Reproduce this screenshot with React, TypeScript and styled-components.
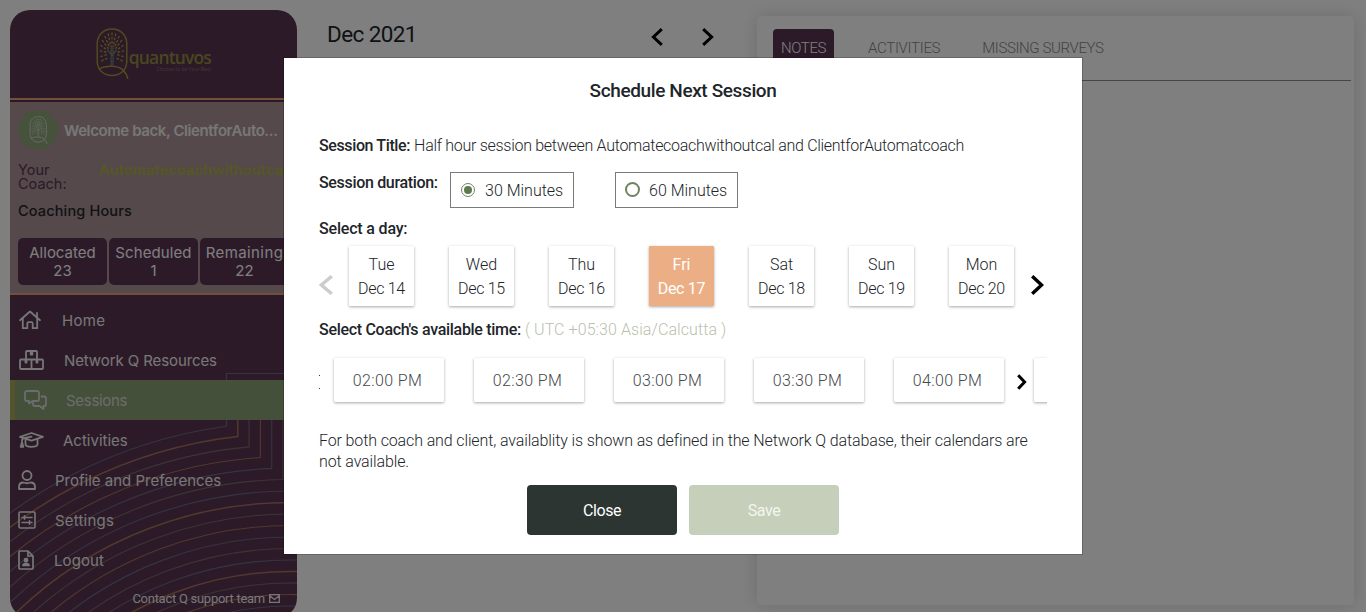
import React from 'react';
import styled, { createGlobalStyle } from 'styled-components';

const Global = createGlobalStyle`
  * { box-sizing: border-box; }
  html, body { margin: 0; height: 612px; overflow: hidden; background: #fff; }
  body { font-family: Roboto, "Liberation Sans", sans-serif; color: #212529; }
`;

const Page = styled.div`
  display: flex;
  align-items: flex-start;
  width: 1366px;
  height: 612px;
  overflow: hidden;
  background: #fff;
`;

const Txt = styled.span<{ $ls?: number }>`
  letter-spacing: ${p => p.$ls ?? 0}px;
  white-space: nowrap;
`;

/* ---------- sidebar ---------- */

const Sidebar = styled.aside`
  display: flex;
  flex-direction: column;
  flex: none;
  width: 287px;
  height: 608px;
  margin: 10px 0 0 10px;
  border-radius: 20px;
  overflow: hidden;
  background: #583450;
  font-family: Inter, "Open Sans", sans-serif;
  position: relative;
`;

const LogoArea = styled.div`
  display: flex;
  align-items: flex-start;
  height: 88px;
  padding: 18px 0 0 86px;
`;

const LogoWords = styled.div`
  display: flex;
  flex-direction: column;
  align-items: flex-end;
  width: 82px;
  margin: 18px 0 0 0;
  color: #948d40;
  font-family: "Open Sans", sans-serif;
`;

const Brand = styled.div`
  font-size: 17.5px;
  line-height: 23px;
  font-weight: 600;
  letter-spacing: -0.85px;
`;

const Motto = styled.div`
  font-size: 5px;
  line-height: 6px;
  margin-top: -3px;
  white-space: nowrap;
  color: #7d7d66;
`;

const Welcome = styled.section`
  height: 197px;
  padding: 8px 0 0 8px;
  border-top: 2px solid #e6a06f;
  border-bottom: 2px solid #e6a06f;
  background: #aa9296;
  box-shadow: inset 0 2px 0 #583450;
`;

const Greeting = styled.div`
  display: flex;
  align-items: center;
  gap: 6px;
  height: 44px;
  color: #efefef;
  font-size: 15px;
  font-weight: 600;
`;

const Avatar = styled.div`
  display: flex;
  align-items: center;
  justify-content: center;
  width: 40px;
  height: 40px;
  border-radius: 50%;
  background: #8ca577;
`;

const Coach = styled.div`
  display: flex;
  height: 31px;
  margin-top: 11px;
  font-size: 14.5px;
  line-height: 14px;
  color: #583450;
`;

const CoachLabel = styled.div`
  display: flex;
  flex-direction: column;
  width: 81px;
`;

const CoachName = styled.div`
  color: #aab045;
  font-weight: 600;
`;

const HoursTitle = styled.div`
  margin-top: 7px;
  font-size: 14.5px;
  line-height: 20px;
  font-weight: 500;
  color: #212529;
`;

const Hours = styled.div`
  display: flex;
  gap: 2px;
  margin-top: 17px;
`;

const HourBox = styled.div`
  display: flex;
  flex-direction: column;
  align-items: center;
  flex: none;
  width: 89px;
  height: 47px;
  padding-top: 6px;
  border-radius: 5px;
  background: #583450;
  color: #fff;
  font-size: 15px;
  line-height: 18px;
`;

const Nav = styled.nav`
  display: flex;
  flex-direction: column;
  padding-top: 5px;
  color: #efefef;
`;

const NavItem = styled.div<{ $active?: boolean; $gap: number; $pad: number }>`
  display: flex;
  align-items: center;
  gap: ${p => p.$gap}px;
  height: 40px;
  padding-left: ${p => p.$pad}px;
  font-size: 15px;
  color: ${p => (p.$active ? '#d9d9d9' : '#efefef')};
  border-left: ${p => (p.$active ? '5px solid #aaa45c' : '0')};
  background: ${p => (p.$active ? '#8aa074' : 'transparent')};
  & > svg { flex: none; }
`;

const Front = styled.div`
  position: relative;
`;

const Waves = styled.svg`
  position: absolute;
  left: 0;
  top: 0;
`;

const Support = styled.div`
  display: flex;
  align-items: center;
  justify-content: flex-end;
  gap: 4px;
  height: 20px;
  margin-top: 8px;
  padding-right: 17px;
  color: #efefef;
  font-family: Roboto, sans-serif;
  font-size: 13px;
`;

/* ---------- calendar column and notes panel ---------- */

const Calendar = styled.main`
  display: flex;
  flex: none;
  align-items: center;
  width: 416px;
  height: 34px;
  margin: 18px 0 0 30px;
`;

const Month = styled.h1`
  flex: 1;
  margin: 0;
  padding-bottom: 3px;
  font-size: 22.5px;
  line-height: 30px;
  font-weight: 400;
`;

const Arrows = styled.div`
  display: flex;
  gap: 39px;
  padding: 3px 29px 0 0;
`;

const Notes = styled.section`
  flex: none;
  width: 597px;
  height: 589px;
  margin: 16px 0 0 14px;
  padding: 13px 3px 0 16px;
  border-radius: 5px;
  box-shadow: 0 0 18px rgba(0, 0, 0, 0.15);
`;

const Tabs = styled.div`
  display: flex;
  gap: 26px;
  height: 52px;
  border-bottom: 1px solid #8c8c8c;
`;

const Tab = styled.div<{ $on?: boolean }>`
  height: 51px;
  padding: 9px 8px 0;
  border-radius: 4px;
  font-size: 15px;
  line-height: 20px;
  font-weight: 300;
  color: ${p => (p.$on ? '#fff' : '#868686')};
  background: ${p => (p.$on ? '#583450' : 'transparent')};
`;

/* ---------- dialog ---------- */

const Overlay = styled.div`
  position: fixed;
  inset: 0;
  display: flex;
  align-items: center;
  justify-content: center;
  background: rgba(0, 0, 0, 0.5);
`;

const Dialog = styled.div`
  width: 800px;
  height: 498px;
  padding: 20px 35px 0;
  border: 1px solid rgba(0, 0, 0, 0.2);
  background: #fff;
  background-clip: padding-box;
  font-size: 16px;
  font-weight: 300;
  line-height: 24px;
`;

const Title = styled.h2`
  margin: 0 0 32px;
  font-size: 19px;
  line-height: 26px;
  height: 24px;
  font-weight: 500;
  text-align: center;
`;

const Line = styled.div<{ $mt?: number }>`
  display: flex;
  gap: 4px;
  height: 24px;
  margin-top: ${p => p.$mt ?? 0}px;
`;

const Label = styled(Txt)`
  font-weight: 500;
`;

const Zone = styled(Txt)`
  color: #b9bfae;
`;

const Duration = styled.div`
  display: flex;
  height: 36px;
  margin-top: 14px;
`;

const DurationLabel = styled(Label)`
  width: 131px;
  line-height: 22px;
`;

const Choice = styled.div<{ $w: number }>`
  display: flex;
  align-items: center;
  gap: 10px;
  width: ${p => p.$w}px;
  margin-right: 41px;
  padding: 1px 0 0 10px;
  border: 1px solid #7b7b7b;
  & > span { padding-top: 1px; margin-left: -1px; }
`;

const Radio = styled.i<{ $on?: boolean }>`
  display: flex;
  align-items: center;
  justify-content: center;
  width: ${p => (p.$on ? 14 : 15)}px;
  height: ${p => (p.$on ? 14 : 15)}px;
  margin: ${p => (p.$on ? '-2px 1px 0 0' : '-2px 0 0 -1px')};
  border: ${p => (p.$on ? '1px' : '2px')} solid #6f8560;
  border-radius: 50%;
  &::after {
    content: '';
    width: 8px;
    height: 8px;
    border-radius: 50%;
    background: ${p => (p.$on ? '#5f7a4d' : 'transparent')};
  }
`;

const Days = styled.div`
  display: flex;
  align-items: center;
  height: 60px;
  margin-top: 5px;
  & > svg { margin-top: 18px; }
`;

const DayList = styled.div`
  display: flex;
  gap: 35px;
  margin: 0 17px 0 16px;
`;

const Day = styled.div<{ $on?: boolean }>`
  display: flex;
  flex-direction: column;
  align-items: center;
  width: 65px;
  height: 60px;
  padding-top: 7px;
  border-radius: 1px;
  box-shadow: 0 1px 3px rgba(0, 0, 0, 0.35);
  font-weight: ${p => (p.$on ? 400 : 300)};
  color: ${p => (p.$on ? '#fff' : '#212529')};
  background: ${p => (p.$on ? '#ecae84' : '#fff')};
`;

const Times = styled.div`
  display: flex;
  align-items: center;
  width: 728px;
  height: 60px;
  margin-top: 8px;
  overflow: hidden;
  & > svg { flex: none; margin: 3px 7px 0 1px; }
`;

const Dots = styled.div`
  display: flex;
  flex-direction: column;
  justify-content: space-between;
  flex: none;
  width: 15px;
  height: 14px;
  margin-top: 3px;
  &::before, &::after {
    content: '';
    width: 1px;
    height: 1px;
    background: #333;
  }
`;

const Slot = styled.div<{ $gap?: number }>`
  display: flex;
  align-items: center;
  justify-content: center;
  flex: none;
  width: 110px;
  height: 44px;
  padding: 2px 3px 0 0;
  margin-right: ${p => p.$gap ?? 30}px;
  border-radius: 1px;
  box-shadow: 0 1px 3px rgba(0, 0, 0, 0.35);
  color: #45494d;
`;

const Hint = styled.div`
  display: flex;
  flex-direction: column;
  height: 42px;
  margin-top: 20px;
  line-height: 21px;
`;

const Buttons = styled.div`
  display: flex;
  justify-content: center;
  gap: 12px;
  margin-top: 13px;
`;

const Button = styled.button<{ $muted?: boolean }>`
  width: 150px;
  height: 50px;
  padding: 1px 0 0;
  border: 0;
  border-radius: 4px;
  font: 400 16px Roboto, sans-serif;
  color: ${p => (p.$muted ? '#f3f5ef' : '#fff')};
  background: ${p => (p.$muted ? '#c5cfba' : '#2d3533')};
`;

/* ---------- drawings ---------- */

const Chevron = ({ w, h, left, color = '#000', sw = 3 }: { w: number; h: number; left?: boolean; color?: string; sw?: number }) => (
  <svg width={w} height={h} viewBox={`0 0 ${w} ${h}`} fill="none" stroke={color} strokeWidth={sw}>
    <path d={left ? `M${w - 1.2} 1.2L2.4 ${h / 2}L${w - 1.2} ${h - 1.2}` : `M1.2 1.2L${w - 2.4} ${h / 2}L1.2 ${h - 1.2}`} />
  </svg>
);

const Tree = ({ w, h, color, leaf, trunk, sw }: { w: number; h: number; color: string; leaf: string; trunk: string; sw: number }) => {
  const rays = [-108, -90, -72, -54, -36, -18, 0, 18, 36, 54, 72, 90, 108];
  return (
    <svg width={w} height={h} viewBox="0 0 32 50" fill="none" stroke={color} strokeWidth={sw}>
      <path d="M15.5 1C24 1 30 7 30 15.500V32C30 41 24 46.500 15.500 46.500C7 46.500 1 41 1 32V15.500C1 7 7 1 15.500 1Z" />
      <path d="M2.500 40C10 36 22 37 26 41C29 44 30.500 46 31 50" />
      <g stroke={leaf} strokeWidth={sw * 0.95} strokeDasharray="2.600 1.500">
        {rays.map(deg => {
          const s = Math.sin((deg * Math.PI) / 180);
          const c = Math.cos((deg * Math.PI) / 180);
          return <path key={deg} d={`M${15.5 + s * 12} ${22.5 - c * 18}L${15.5 + s * 4} ${24 - c * 6}`} />;
        })}
        <path d="M5 32.500l6-3M26 32.500l-6-3" />
      </g>
      <path d="M14.700 37V18M16.500 37V18M15.500 27L11.500 22M15.500 27L19.500 22" stroke={trunk} strokeWidth="1" />
    </svg>
  );
};

const stroke = { fill: 'none', stroke: 'currentColor', strokeWidth: 1.8, strokeLinejoin: 'round' as const, strokeLinecap: 'round' as const };

const HomeIcon = () => (
  <svg width="22" height="20" viewBox="0 0 22 20" {...stroke}>
    <path d="M1 10.200L11 1.500L21 10.200M18 7V3M3.800 8.500V18.200H8.300V13.500Q8.300 12.200 9.600 12.200H12.400Q13.700 12.200 13.700 13.500V18.200H18.200V8.500" />
  </svg>
);
const BoxesIcon = () => (
  <svg width="25" height="20" viewBox="0 0 25 20" {...stroke}>
    <path d="M7 9V2Q7 1 8 1H17Q18 1 18 2V9M2 9.500H23Q24 9.500 24 10.500V18Q24 19 23 19H2Q1 19 1 18V10.500Q1 9.500 2 9.500ZM12.500 9.500V19M11.700 1.500V4.500H13.300V1.500M6.500 10V12.500H7.500V10M17.500 10V12.500H18.500V10" />
  </svg>
);
const ChatIcon = () => (
  <svg width="23" height="20" viewBox="0 0 23 20" {...stroke}>
    <path d="M3 1H13Q15 1 15 3V9Q15 11 13 11H8.500L5 13.500V11H3Q1 11 1 9V3Q1 1 3 1ZM17.500 6.500H20Q22 6.500 22 8.500V14Q22 16 20 16H19.500V19L15.500 16H11Q9 16 9 14V13" />
  </svg>
);
const CapIcon = () => (
  <svg width="25" height="16" viewBox="0 0 25 16" {...stroke}>
    <path d="M12.500 1L24 4.800L12.500 8.600L1 4.800ZM6.500 7V12.500Q7 14.800 12.500 14.800T18.500 12.500V7M12.500 4.700L5 6.200Q3 6.700 3 9M3 10L1.700 14.800H4.300L3 10" />
  </svg>
);
const UserIcon = () => (
  <svg width="18" height="20" viewBox="0 0 18 20" {...stroke}>
    <circle cx="9" cy="5.500" r="4.500" />
    <path d="M1 19V17Q1 12.500 5.500 12.500Q9 14 12.500 12.500Q17 12.500 17 17V19Z" />
  </svg>
);
const SlidersIcon = () => (
  <svg width="18" height="18" viewBox="0 0 18 18" {...stroke} strokeWidth={1.6}>
    <rect x="1" y="1" width="16" height="16" rx="1.200" />
    <path d="M4 6.500H14M6.500 4.700V8.300M4 11.500H14M11.500 9.700V13.300" />
  </svg>
);
const FileIcon = () => (
  <svg width="16" height="20" viewBox="0 0 16 20" {...stroke} strokeWidth={1.7}>
    <path d="M2 1H10L15 6V18Q15 19 14 19H2Q1 19 1 18V2Q1 1 2 1ZM10 1V6H15" />
    <circle cx="8" cy="10.300" r="1.600" fill="currentColor" />
    <path d="M5 15.500Q5 13.500 8 13.500T11 15.500Z" fill="currentColor" />
  </svg>
);

const waveColors = ['#6a6a82', '#a4705a', '#7a6a68', '#a4705a', '#6a6a82', '#7a6a68'];

const WaveArt = () => (
  <Waves width="287" height="608" viewBox="10 10 287 608" fill="none">
    <path d="M297 373.500H226.500V426" stroke={waveColors[0]} strokeWidth="1.200" />
    {Array.from({ length: 24 }, (_, i) => {
      const r = 476 - i * 11.5;
      const edge = i < 6 ? 226.5 + i * 11.3 : 297;
      const y = 898 - Math.sqrt(r * r - (290 - edge) ** 2);
      return (
        <path
          key={i}
          d={`M${edge} ${i < 6 ? 384 + i * 2 : y}V${y}A${r} ${r} 0 0 0 ${290 - r} 898`}
          stroke={waveColors[i % 6]}
          strokeWidth={i % 6 === 1 ? 1.5 : 1.1}
        />
      );
    })}
  </Waves>
);

const nav = [
  { label: 'Home', icon: <HomeIcon />, pad: 9, gap: 21, ls: 0.3 },
  { label: 'Network Q Resources', icon: <BoxesIcon />, pad: 9, gap: 20, ls: -0.1 },
  { label: 'Sessions', icon: <ChatIcon />, pad: 9, gap: 19, ls: -0.3 },
  { label: 'Activities', icon: <CapIcon />, pad: 9, gap: 19, ls: 0 },
  { label: 'Profile and Preferences', icon: <UserIcon />, pad: 8, gap: 19, ls: 0 },
  { label: 'Settings', icon: <SlidersIcon />, pad: 8, gap: 19, ls: 0.2 },
  { label: 'Logout', icon: <FileIcon />, pad: 8, gap: 20, ls: 0.1 },
];

const hours: [string, string, number][] = [['Allocated', '23', 0], ['Scheduled', '1', 0.1], ['Remaining', '22', 0.4]];
const days = [['Tue', 'Dec 14'], ['Wed', 'Dec 15'], ['Thu', 'Dec 16'], ['Fri', 'Dec 17'], ['Sat', 'Dec 18'], ['Sun', 'Dec 19'], ['Mon', 'Dec 20']];
const slots = ['02:00 PM', '02:30 PM', '03:00 PM', '03:30 PM', '04:00 PM'];

export default function App() {
  return (
    <>
      <Global />
      <Page>
        <Sidebar>
          <WaveArt />
          <Front>
            <LogoArea>
              <Tree w={33} h={51} color="#a29a3e" leaf="#a29a3e" trunk="#74957b" sw={1.4} />
              <LogoWords>
                <Brand>quantuvos</Brand>
                <Motto>Choose to be Your Best</Motto>
              </LogoWords>
            </LogoArea>
            <Welcome>
              <Greeting>
                <Avatar><Tree w={19} h={28} color="#d5d9cc" leaf="#d5d9cc" trunk="#d5d9cc" sw={1.6} /></Avatar>
                <Txt $ls={-0.4}>Welcome back, ClientforAuto...</Txt>
              </Greeting>
              <Coach>
                <CoachLabel><Txt>Your</Txt><Txt>Coach:</Txt></CoachLabel>
                <CoachName><Txt $ls={0.15}>Automatecoachwithoutcal</Txt></CoachName>
              </Coach>
              <HoursTitle><Txt $ls={0.15}>Coaching Hours</Txt></HoursTitle>
              <Hours>
                {hours.map(([k, v, ls]) => <HourBox key={k}><Txt $ls={ls}>{k}</Txt><Txt>{v}</Txt></HourBox>)}
              </Hours>
            </Welcome>
            <Nav>
              {nav.map(n => (
                <NavItem key={n.label} $active={n.label === 'Sessions'} $gap={n.gap} $pad={n.pad}>
                  {n.icon}
                  <Txt $ls={n.ls}>{n.label}</Txt>
                </NavItem>
              ))}
            </Nav>
            <Support>
              <Txt $ls={-0.27}>Contact Q support team</Txt>
              <svg width="11" height="9" viewBox="0 0 11 9" fill="none" stroke="currentColor" strokeWidth="1.300">
                <path d="M.7.7H10.300V8.300H.7ZM1 2L5.500 5.500L10 2" />
              </svg>
            </Support>
          </Front>
        </Sidebar>
        <Calendar>
          <Month><Txt $ls={-0.6}>Dec 2021</Txt></Month>
          <Arrows>
            <Chevron w={12} h={18} left />
            <Chevron w={12} h={18} />
          </Arrows>
        </Calendar>
        <Notes>
          <Tabs>
            <Tab $on><Txt $ls={-0.4}>NOTES</Txt></Tab>
            <Tab><Txt $ls={-0.3}>ACTIVITIES</Txt></Tab>
            <Tab><Txt $ls={-0.38}>MISSING SURVEYS</Txt></Tab>
          </Tabs>
        </Notes>
      </Page>
      <Overlay>
        <Dialog>
          <Title><Txt $ls={-0.38}>Schedule Next Session</Txt></Title>
          <Line>
            <Label $ls={-0.38}>Session Title:</Label>
            <Txt $ls={-0.29}>Half hour session between Automatecoachwithoutcal and ClientforAutomatcoach</Txt>
          </Line>
          <Duration>
            <DurationLabel $ls={-0.33}>Session duration:</DurationLabel>
            <Choice $w={124}><Radio $on /><Txt>30 Minutes</Txt></Choice>
            <Choice $w={123}><Radio /><Txt>60 Minutes</Txt></Choice>
          </Duration>
          <Line $mt={9}><Label $ls={-0.18}>Select a day:</Label></Line>
          <Days>
            <Chevron w={14} h={20} left color="#ccc" sw={3.4} />
            <DayList>
              {days.map(([d, date]) => (
                <Day key={d} $on={d === 'Fri'}><Txt>{d}</Txt><Txt $ls={-0.3}>{date}</Txt></Day>
              ))}
            </DayList>
            <Chevron w={13} h={20} sw={3.4} />
          </Days>
          <Line $mt={12}>
            <Label $ls={-0.3}>Select Coach's available time:</Label>
            <Zone $ls={0.08}>( UTC +05:30 Asia/Calcutta )</Zone>
          </Line>
          <Times>
            <Dots />
            {slots.map((s, i) => <Slot key={s} $gap={i === 4 ? 12 : 30}><Txt $ls={0.4}>{s}</Txt></Slot>)}
            <Chevron w={10} h={16} />
            <Slot />
          </Times>
          <Hint>
            <Txt $ls={-0.125}>For both coach and client, availablity is shown as defined in the Network Q database, their calendars are</Txt>
            <Txt $ls={-0.125}>not available.</Txt>
          </Hint>
          <Buttons>
            <Button><Txt $ls={-0.4}>Close</Txt></Button>
            <Button $muted><Txt $ls={-0.4}>Save</Txt></Button>
          </Buttons>
        </Dialog>
      </Overlay>
    </>
  );
}
